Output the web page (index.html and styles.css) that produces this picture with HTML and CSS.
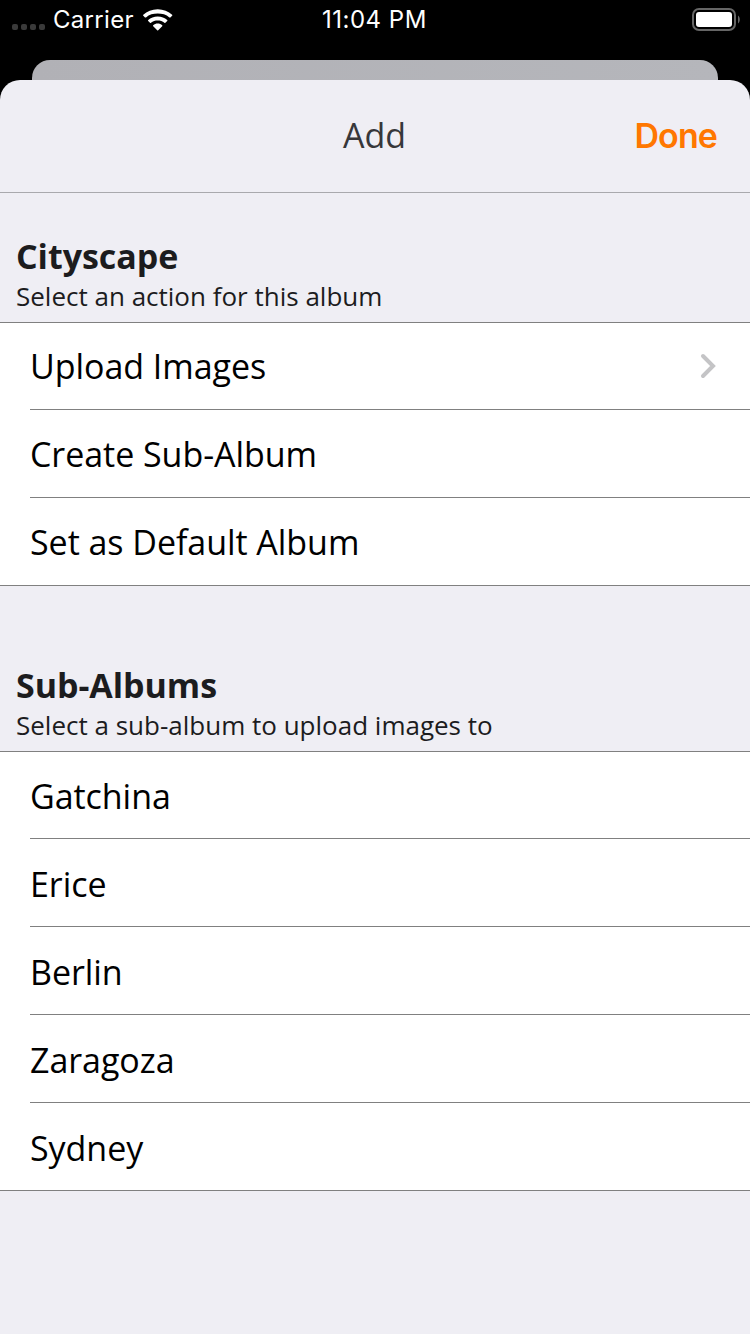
FILE: index.html
```html
<!DOCTYPE html>
<html lang="en">
<head>
<meta charset="utf-8">
<title>Add</title>
<link rel="stylesheet" href="styles.css">
</head>
<body>
<div class="status">
  <div class="signal"><i></i><i></i><i></i><i></i></div>
  <span class="carrier">Carrier</span>
  <svg class="wifi" width="30" height="22" viewBox="0 0 30 22" fill="#fff">
    <path d="M14.700.2C9 .2 4 2.400.3 5.700q-.5.500 0 1L2 8.400q.5.400 1 0C6.200 5.600 10.300 4.600 14.700 4.600s8.500 1 11.700 3.800q.5.400 1 0l1.700-1.700q.5-.5 0-1C25.400 2.400 20.400.2 14.700.2z"/>
    <path d="M14.700 7.500c-3.700 0-7 1.400-9.500 3.500q-.5.500 0 1l1.800 1.700q.5.500 1 0c1.800-1.500 4.200-2.100 6.700-2.100s4.900.6 6.700 2.100q.5.500 1 0l1.800-1.700q.5-.5 0-1c-2.500-2.100-5.800-3.500-9.500-3.500z"/>
    <path d="M14.700 14.600c-1.700 0-3.300.6-4.500 1.600q-.5.500 0 1l4 4q.5.500 1 0l4-4q.5-.5 0-1c-1.200-1-2.800-1.600-4.500-1.600z"/>
  </svg>
  <span class="time">11:04 PM</span>
  <svg class="battery" width="48" height="23" viewBox="0 0 48 23">
    <rect x="1" y="1" width="42" height="21" rx="6" fill="none" stroke="#666" stroke-width="2"/>
    <rect x="4" y="4" width="36" height="15" rx="3" fill="#fff"/>
    <path d="M46 7.500c2.400 1.500 2.400 6.500 0 8z" fill="#666"/>
  </svg>
</div>
<div class="backdrop"></div>
<main class="sheet">
  <header class="nav"><span></span><h1>Add</h1><span class="done">Done</span></header>
  <section class="first">
    <div class="heading"><h2>Cityscape</h2><p>Select an action for this album</p></div>
    <ul class="list">
      <li><span>Upload Images</span><svg class="chevron" width="16" height="26" viewBox="0 0 16 26" fill="none" stroke="#c4c4c6" stroke-width="4" stroke-linecap="round"><path d="M3 3l10 10L3 23"/></svg></li>
      <li><span>Create Sub-Album</span></li>
      <li><span>Set as Default Album</span></li>
    </ul>
  </section>
  <section class="second">
    <div class="heading"><h2>Sub-Albums</h2><p>Select a sub-album to upload images to</p></div>
    <ul class="list">
      <li><span>Gatchina</span></li>
      <li><span>Erice</span></li>
      <li><span>Berlin</span></li>
      <li><span>Zaragoza</span></li>
      <li><span>Sydney</span></li>
    </ul>
  </section>
</main>
</body>
</html>
```
FILE: styles.css
```css
* { box-sizing: border-box; margin: 0; padding: 0; }
body { width: 750px; height: 1334px; background: #000; overflow: hidden; font-family: "Open Sans", sans-serif; }
.status { height: 60px; display: grid; grid-template-columns: 42px 101px 179px 370px 48px; align-items: start; color: #fff; font: 400 24px/28px Inter, sans-serif; }
.signal { display: flex; gap: 3px; padding: 24px 0 0 12px; }
.signal i { flex: none; width: 6px; height: 6px; border-radius: 2px; background: #3a3a3a; }
.carrier { padding: 6px 0 0 11px; letter-spacing: .3px; }
.wifi { margin-top: 9px; }
.time { padding-top: 6px; letter-spacing: .5px; white-space: nowrap; }
.battery { margin-top: 8px; }
.backdrop { height: 20px; margin: 0 32px; background: linear-gradient(90deg, #b1b1b6, #b5b6bb); border-radius: 18px 18px 0 0; }
.sheet { height: 1254px; background: #efeef4; border-radius: 20px 20px 0 0; }
.nav { height: 113px; border-bottom: 1px solid #a9a9ad; display: grid; grid-template-columns: 1fr auto 1fr; align-items: center; padding: 0 33px 0 32px; }
.nav h1 { padding-bottom: 2px; font-size: 34px; font-weight: 400; color: #37373a; }
.done { justify-self: end; color: #ff7700; font: 600 34px/40px Inter, sans-serif; letter-spacing: -.9px; }
.heading { padding: 40px 16px 0; height: 129px; color: #1c1c1e; }
.second .heading { height: 165px; padding-top: 76px; }
.heading h2 { font-size: 34px; line-height: 46px; font-weight: 700; letter-spacing: -.05px; }
.heading p { font-size: 26px; line-height: 34px; }
.list { list-style: none; background: #fff; border: solid #808080; border-width: 1px 0; }
.list li { height: 88px; margin-left: 30px; padding-right: 34px; border-bottom: 1px solid #808080; display: flex; align-items: center; justify-content: space-between; font-size: 34px; line-height: 46px; letter-spacing: -.05px; color: #000; }
.list li:first-child { height: 87px; }
.list li:last-child { height: 87px; border-bottom: 0; }
.second .list li { padding-top: 2px; }
```
